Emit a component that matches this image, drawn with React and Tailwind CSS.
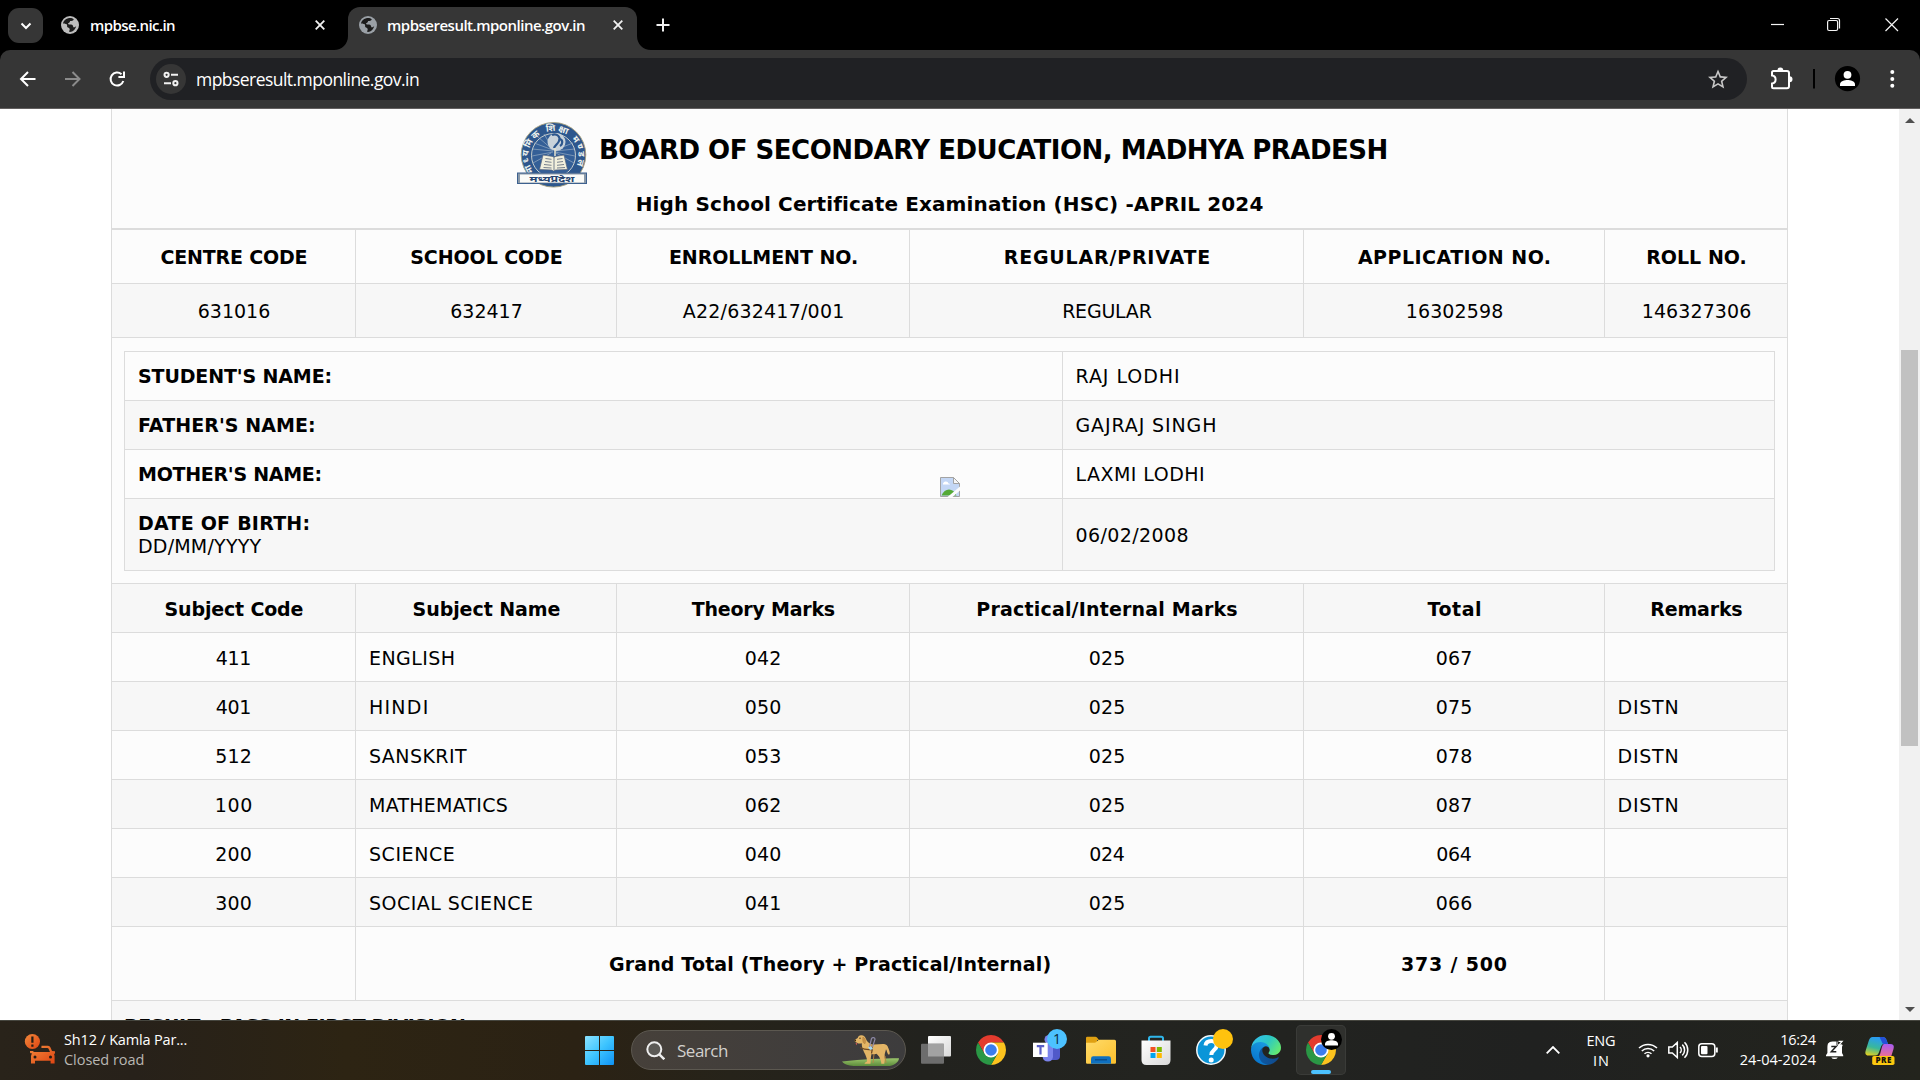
import { useLayoutEffect, useRef, useState } from "react";

/* Text whose drawn width is held to a fixed number of pixels through tracking. */
function Fit({ w, children, className = "" }) {
  const ref = useRef(null);
  const [space, setSpace] = useState(0);
  const text = String(children);
  useLayoutEffect(() => {
    const cs = getComputedStyle(ref.current);
    const ctx = document.createElement("canvas").getContext("2d");
    ctx.font = `${cs.fontWeight} ${cs.fontSize} ${cs.fontFamily}`;
    const m = ctx.measureText(text);
    const ink = m.actualBoundingBoxRight + m.actualBoundingBoxLeft;
    setSpace((w - ink) / Math.max(1, text.length - 1));
  }, [text, w]);
  return (
    <span
      ref={ref}
      className={`inline-block whitespace-nowrap ${className}`}
      style={{ letterSpacing: `${space}px`, marginRight: `${-space}px` }}
    >
      {text}
    </span>
  );
}

function Globe({ color }) {
  return (
    <svg className="h-[18px] w-[18px] shrink-0" viewBox="0 0 18 18">
      <circle cx="9" cy="9" r="9" fill={color} />
      <path d="M7.200 2.200C9 1.700 11.500 2 12.800 3.300c-.6 1.500-2 1.700-3.700 1.800-.3 1.600-.9 1.900-2.200 2.300.2 1 1.500 1 3 1 1.800.2 2.500 1.300 2.300 2.800 1.200.3 2.300-.3 3-1.200-.4 2.200-1.700 4-3.600 5.200-1 .6-2.400.8-3.200.7-.5-1 .5-1.900.3-3-.4-1-1.700-.9-2.400-1.800-.5-1 .2-2-.6-2.800-.9-.8-2.500-.3-3.700-1.100C2.300 5 4.300 2.800 7.200 2.200z" fill="#1c1c1c" />
    </svg>
  );
}

function TabClose() {
  return (
    <svg className="h-[10px] w-[10px]" viewBox="0 0 10 10" stroke="#f1f1f1" strokeWidth="1.8">
      <path d="M.7.7l8.600 8.600M9.300.7L.7 9.300" />
    </svg>
  );
}

function TabStrip() {
  return (
    <div className="flex h-[50px] bg-black text-[15px] font-semibold text-white">
      <div className="ml-2 mt-2 flex h-[35px] w-[35px] items-center justify-center rounded-[11px] bg-[#363636]">
        <svg className="h-[8px] w-[12px]" viewBox="0 0 12 8" fill="none" stroke="#fff" strokeWidth="2">
          <path d="M1.500 1.500L6 6l4.500-4.500" />
        </svg>
      </div>
      <div className="ml-[18px] mt-[7px] flex h-[36px] w-[273px] items-center">
        <Globe color="#bdbdbd" />
        <div className="ml-[11px] flex-1 leading-none"><Fit w={84}>mpbse.nic.in</Fit></div>
        <div className="mr-[9px]"><TabClose /></div>
      </div>
      <div className="flex items-end">
        <svg className="h-[14px] w-[14px]" viewBox="0 0 14 14"><path d="M14 0v14H0c8 0 14-6 14-14z" fill="#363636" /></svg>
        <div className="flex h-[43px] w-[289px] items-center rounded-t-[12px] bg-[#363636] pb-[7px] pl-[11px] pr-[14px]">
          <Globe color="#9aa0a6" />
          <div className="ml-[10px] flex-1 leading-none"><Fit w={197}>mpbseresult.mponline.gov.in</Fit></div>
          <TabClose />
        </div>
        <svg className="h-[14px] w-[14px]" viewBox="0 0 14 14"><path d="M0 0v14h14C6 14 0 8 0 0z" fill="#363636" /></svg>
      </div>
      <svg className="ml-[5px] mt-[18px] h-[14px] w-[14px]" viewBox="0 0 14 14" stroke="#f1f1f1" strokeWidth="2"><path d="M7 .5v13M.5 7h13" /></svg>
      <svg className="ml-auto mr-[21px] mt-[17px] h-[16px] w-[128px]" viewBox="1771 17 128 16" fill="none" stroke="#f4f4f4" strokeWidth="1.200">
        <path d="M1771 24.500h13" />
        <rect x="1827.600" y="20.500" width="10" height="10" rx="1.500" />
        <path d="M1830 18.500h7.500q2 0 2 2v8" />
        <path d="M1885.500 18.500l12.500 12.500M1898 18.500L1885.500 31" />
      </svg>
    </div>
  );
}

function Toolbar() {
  return (
    <div className="h-[59px] bg-black">
      <div className="flex h-[59px] items-center rounded-t-[10px] border-b border-[#625f5f] bg-[#363636]">
        <svg className="h-[18px] w-[130px] shrink-0" viewBox="0 70 130 18" fill="none" stroke="#fff" strokeWidth="2">
          <path d="M35.500 79H21.500M28 72l-7 7 7 7" />
          <path d="M65 79h14M72.500 72l7 7-7 7" stroke="#8b8b8b" />
          <path d="M123.300 81a6.500 6.500 0 1 1-1.800-6.800M124 71.500V77h-5.600" />
        </svg>
        <div className="ml-[20px] flex h-[42px] flex-1 items-center rounded-full bg-[#202124] pl-[6px] pr-[19px]">
          <div className="flex h-[30px] w-[30px] items-center justify-center rounded-full bg-[#363636]">
            <svg className="h-[16px] w-[16px]" viewBox="0 0 16 16" fill="none" stroke="#f1f1f1" strokeWidth="2">
              <circle cx="3.600" cy="3.800" r="2.100" /><path d="M8 3.800h7M1 12.200h7" /><circle cx="12.400" cy="12.200" r="2.100" />
            </svg>
          </div>
          <div className="ml-[10px] flex-1 pt-px text-[17.500px] leading-none text-white"><Fit w={222}>mpbseresult.mponline.gov.in</Fit></div>
          <svg className="h-[20px] w-[20px]" viewBox="2 2 20 19" fill="#c7c7c7">
            <path d="M22 9.240l-7.190-.62L12 2 9.190 8.630 2 9.240l5.460 4.730L5.820 21 12 17.270 18.180 21l-1.630-7.030L22 9.240zM12 15.400l-3.760 2.270 1-4.280-3.320-2.880 4.380-.38L12 6.100l1.710 4.040 4.380.38-3.320 2.880 1 4.280L12 15.400z" />
          </svg>
        </div>
        <svg className="ml-[20px] h-[30px] w-[153px] shrink-0" viewBox="1767 64 153 30" fill="none">
          <path d="M1773.500 71h13.500q2 0 2 2v13.200q0 2-2 2h-13.500q-1.500 0-1.500-1.500v-3.200c2.600-.4 3.600-2 3.600-4s-1-3.600-3.600-4v-3q0-1.500 1.500-1.500z" stroke="#fff" strokeWidth="2" />
          <path d="M1777.500 70.500a2.900 2.900 0 0 1 5.800 0zM1789.500 76.300a3 3 0 0 1 0 6z" fill="#fff" />
          <path d="M1814 69v19.500" stroke="#000" strokeWidth="2" />
          <circle cx="1847.500" cy="78.700" r="12.600" fill="#000" />
          <circle cx="1847.500" cy="74.800" r="3.900" fill="#fff" />
          <path d="M1840 86v-1.800c0-3 4.800-4.300 7.500-4.300s7.500 1.300 7.500 4.300V86z" fill="#fff" />
          <g fill="#fff"><circle cx="1892.300" cy="71.900" r="2" /><circle cx="1892.300" cy="78.900" r="2" /><circle cx="1892.300" cy="85.800" r="2" /></g>
        </svg>
      </div>
    </div>
  );
}

function BoardSeal() {
  return (
    <svg className="h-[66px] w-[74px]" viewBox="515 122 74 66">
      <defs>
        <path id="sealArc" d="M533.800 171.500A25 25 0 1 1 573.200 171.500" />
      </defs>
      <circle cx="553.500" cy="154.800" r="32.300" fill="#2d578d" stroke="#a9a27f" strokeWidth="0.900" />
      <circle cx="553.500" cy="155.500" r="22" fill="#345f97" stroke="#d5d8d2" strokeWidth="0.900" />
      <g stroke="#aebfce" strokeWidth="0.800" opacity="0.7">
        <path d="M553 150L534 143M553 151L532 149M553 152L532 156M551 153L533 163M553 150L538 137M553 149L544 134M555 150L573 143M555 151L575 149M555 152L575 156M556 153L574 163" />
      </g>
      <text fill="#eef2ee" fontSize="9" fontWeight="700" textLength="104" fontFamily="'Noto Sans', 'Noto Sans Devanagari', sans-serif">
        <textPath href="#sealArc">माध्यमिक शिक्षा मण्डल</textPath>
      </text>
      <circle cx="556.500" cy="142" r="9" fill="#c9d3da" />
      <path d="M552 135c5-2 9 2 7 6-1 3-4 4-5 7M560 139c3 1 3 5 0 7" stroke="#2d578d" strokeWidth="2.200" fill="none" />
      <path d="M555 148v8" stroke="#e8e4cf" strokeWidth="1.500" />
      <path d="M543 155l10 1.500 1 1 1-1 9-1.500 3.500 14.500-12 .5-2 1-2-1-12-.5z" fill="#f1efdc" stroke="#55627a" strokeWidth="0.700" />
      <path d="M554 157v13M545.500 158.500l6 .8M545 161.500l6.500.8M544 164.500l7.500.8M543.500 167.500l8 .5M557 159.300l5.500-.8M557 162.300l6-.8M557 165.300l7-.8M557 168l8-.5" stroke="#77808c" strokeWidth="1" />
      <rect x="517.500" y="173" width="69" height="10.500" fill="#8a99a8" stroke="#3d618f" strokeWidth="1" />
      <rect x="520" y="174.500" width="64" height="8" fill="#fbfbf8" />
      <text x="552" y="182" textAnchor="middle" textLength="45" lengthAdjust="spacingAndGlyphs" fill="#28456f" fontSize="8.500" fontWeight="700" fontFamily="'Noto Sans', 'Noto Sans Devanagari', sans-serif">मध्यप्रदेश</text>
    </svg>
  );
}

function BrokenImage() {
  return (
    <svg className="absolute left-[816px] top-[28px] h-[20px] w-[20px]" viewBox="0 0 20 20">
      <path d="M.5.5h13l6 6v13H.5z" fill="#c4d7f5" stroke="#a3a3a3" />
      <path d="M1.500 18.500c3-8 12-8 15 0z" fill="#54a936" />
      <path d="M3 6.500q1-2.500 3-2 2 0 2.500 2 1.500 0 1.500 1H3z" fill="#fff" />
      <path d="M13.500.5v6h6z" fill="#f7f7f7" stroke="#a3a3a3" />
      <path d="M20 9.500L7.500 20h5L20 13.500z" fill="#fcfcfc" />
    </svg>
  );
}

const COLS = "grid grid-cols-[244px_261px_293px_394px_301px_184px]";
const BOX = "flex items-center border-l border-t border-[#dcdcdc]";
const CELL = `${BOX} pt-px last:border-r`;
const LOW_CELL = `${BOX} pt-[3px] last:border-r`;

const HEADS = [["CENTRE CODE", 146], ["SCHOOL CODE", 150.5], ["ENROLLMENT NO.", 187], ["REGULAR/PRIVATE", 204.500], ["APPLICATION NO.", 192], ["ROLL NO.", 98.500]];
const CODES = [["631016", 70.500], ["632417", 70.500], ["A22/632417/001", 160.500], ["REGULAR", 88.500], ["16302598", 94.500], ["146327306", 106.500]];
const PERSON = [
  ["STUDENT'S NAME:", 191.500, "RAJ LODHI", 101.500],
  ["FATHER'S NAME:", 175, "GAJRAJ SINGH", 138.700],
  ["MOTHER'S NAME:", 181.500, "LAXMI LODHI", 126.500],
  ["DATE OF BIRTH:", 169.500, "06/02/2008", 111],
];
const SUBJECT_HEADS = [["Subject Code", 137], ["Subject Name", 146], ["Theory Marks", 143], ["Practical/Internal Marks", 260], ["Total", 52.700], ["Remarks", 91]];
const SUBJECTS = [
  ["411", "ENGLISH", 83.700, "042", "025", "067", ""],
  ["401", "HINDI", 56.700, "050", "025", "075", "DISTN"],
  ["512", "SANSKRIT", 97, "053", "025", "078", "DISTN"],
  ["100", "MATHEMATICS", 136.700, "062", "025", "087", "DISTN"],
  ["200", "SCIENCE", 83.700, "040", "024", "064", ""],
  ["300", "SOCIAL SCIENCE", 162, "041", "025", "066", ""],
];

function ResultSheet() {
  return (
    <div className="mx-auto w-[1677px] font-['Verdana','DejaVu_Sans',sans-serif] text-[19px] leading-[23px] text-black">
      <div className="flex h-[119px] flex-col items-center border-x border-[#dcdcdc] bg-[#fcfcfc]">
        <div className="flex pl-[2px] pt-[13px]">
          <BoardSeal />
          <div className="ml-[10px] w-[787px] pt-[12px] text-[26px] font-bold leading-[32px]"><Fit w={785.500}>BOARD OF SECONDARY EDUCATION, MADHYA PRADESH</Fit></div>
        </div>
        <div className="mt-[4px] text-[20px] font-bold leading-[24px]"><Fit w={625}>High School Certificate Examination (HSC) -APRIL 2024</Fit></div>
      </div>
      <div className={`${COLS} h-[55px] border-t border-[#dcdcdc] bg-[#fcfcfc] font-bold`}>
        {HEADS.map(([t, w]) => <div key={t} className={`${CELL} justify-center pl-px`}><Fit w={w}>{t}</Fit></div>)}
      </div>
      <div className={`${COLS} h-[54px] bg-[#f7f7f7]`}>
        {CODES.map(([t, w]) => <div key={t} className={`${CELL} justify-center pl-px`}><Fit w={w}>{t}</Fit></div>)}
      </div>
      <div className="h-[246px] border border-b-0 border-[#dcdcdc] bg-[#fcfcfc] px-[12px] pt-[13px]">
        <div className="border-b border-[#dcdcdc]">
          {PERSON.map(([label, lw, value, vw], i) => (
            <div key={label} className={`relative grid grid-cols-[938px_713px] ${i === 3 ? "h-[72px]" : "h-[49px]"} ${i % 2 ? "bg-[#f7f7f7]" : ""}`}>
              <div className={`${CELL} pl-[13px]`}>
                <div className="flex flex-col">
                  <b><Fit w={lw}>{label}</Fit></b>
                  {i === 3 && <Fit w={122.500}>DD/MM/YYYY</Fit>}
                </div>
              </div>
              <div className={`${BOX} border-r pl-[12.500px] pt-px`}><Fit w={vw}>{value}</Fit></div>
              {i === 2 && <BrokenImage />}
            </div>
          ))}
        </div>
      </div>
      <div className={`${COLS} h-[49px] bg-[#f7f7f7] font-bold`}>
        {SUBJECT_HEADS.map(([t, w]) => <div key={t} className={`${LOW_CELL} justify-center pl-px`}><Fit w={w}>{t}</Fit></div>)}
      </div>
      {SUBJECTS.map(([code, name, nw, theory, practical, total, remark], i) => (
        <div key={code} className={`${COLS} h-[49px] ${i % 2 ? "bg-[#f7f7f7]" : "bg-[#fcfcfc]"}`}>
          <div className={`${LOW_CELL} justify-center`}><Fit w={34.500}>{code}</Fit></div>
          <div className={`${LOW_CELL} pl-[13px]`}><Fit w={nw}>{name}</Fit></div>
          <div className={`${LOW_CELL} justify-center`}><Fit w={34.500}>{theory}</Fit></div>
          <div className={`${LOW_CELL} justify-center pl-px`}><Fit w={34.500}>{practical}</Fit></div>
          <div className={`${LOW_CELL} justify-center`}><Fit w={34.500}>{total}</Fit></div>
          <div className={`${LOW_CELL} pl-[12.500px]`}>{remark && <Fit w={59}>{remark}</Fit>}</div>
        </div>
      ))}
      <div className="grid h-[74px] grid-cols-[244px_948px_301px_184px] bg-[#fcfcfc] font-bold">
        <div className={CELL} />
        <div className={`${CELL} justify-center pl-px`}><Fit w={441.500}>Grand Total (Theory + Practical/Internal)</Fit></div>
        <div className={`${CELL} justify-center`}><Fit w={104.700}>373 / 500</Fit></div>
        <div className={CELL} />
      </div>
      <div className="flex h-[49px] items-center border border-[#dcdcdc] bg-[#f7f7f7] pl-[12px] pt-[3px] font-bold"><Fit w={340}>RESULT : PASS IN FIRST DIVISION</Fit></div>
    </div>
  );
}

function Scrollbar() {
  return (
    <div className="flex w-[21px] shrink-0 flex-col items-center bg-[#f1f1f1]">
      <svg className="mt-[9px] h-[5px] w-[10px]" viewBox="0 0 10 5"><path d="M0 5L5 0l5 5z" fill="#505050" /></svg>
      <div className="mt-[227px] h-[396px] w-[17px] bg-[#c1c1c1]" />
      <svg className="mb-[8px] mt-auto h-[5px] w-[10px]" viewBox="0 0 10 5"><path d="M0 0h10L5 5z" fill="#505050" /></svg>
    </div>
  );
}

function ChromeMark() {
  return (
    <g transform="translate(25 25) scale(.625)">
      <path d="M-20.780-12A24 24 0 0 1 20.780-12H0L-10.390 6z" fill="#e33b2e" />
      <path d="M20.780-12A24 24 0 0 1 0 24L10.390 6 0-12z" fill="#fcc31e" />
      <path d="M0 24A24 24 0 0 1-20.780-12L-10.390 6H10.390z" fill="#2a9745" />
      <circle r="12" fill="#fff" />
      <circle r="9.300" fill="#3b7ded" />
    </g>
  );
}

function Tile({ children, active }) {
  return (
    <div className={`h-[50px] w-[50px] shrink-0 rounded-[5px] ${active ? "bg-[#2f302d] ring-1 ring-inset ring-[#3a3b38]" : ""}`}>
      <svg className="h-[50px] w-[50px]" viewBox="0 0 50 50">{children}</svg>
    </div>
  );
}

function GuideDog() {
  return (
    <svg className="h-[33px] w-[58px]" viewBox="842 1035 58 33" fill="none">
      <defs>
        <linearGradient id="lawn" x1="0" x2="0" y1="0" y2="1"><stop stopColor="#9cc66b" /><stop offset="1" stopColor="#5d8d3c" /></linearGradient>
      </defs>
      <path d="M842 1062.500c10-1 20-2.300 30-2.600 9-.3 19-.6 27-.7 0 4-6 7.800-11 7.800h-32c-6 0-11-1-14-4.500z" fill="url(#lawn)" />
      <path d="M860 1036.500c3-.8 5 .6 6 3.500.8 2.500 3 4.500 6 5.500 4 .5 9-.8 13-.3 2.600.8 3 3 4 5.500.6 2 1.500 4.500-.2 5-1.600-1-1.800-4-2.800-5.500-.6 3-1.500 4-1.300 7 .3 2.500-.2 5-.4 7.500h-3c0-3-1-5-2.300-7.300-.8-1.200-1.700-2-2.500-2.700-2 .5-3.500.8-5 .4-.8 3-.7 6-1 9.600h-6c.4-1.500 2-1.500 2.600-2.500-.2-4-1.600-6-3-9-1.300-3-2.500-5.500-2.300-9-1.500.6-3.600.5-4.800-.5-1.500-.4-2.700-1.500-2.600-2.500.8-1 2.500-1.200 3.300-2.200.5-1.500 1.200-2.200 2.300-2.500z" fill="#e3b566" />
      <path d="M863 1038c2 1 3 4 2 6.500-1.500.3-2.500-2-2-6.500zM874 1055l-1 9M885 1057l1 7" stroke="#b98741" strokeWidth="0.900" fill="#c8934a" />
      <path d="M860 1048.500c3 1.500 8 2.500 12 2M872 1046.500c.5 3 .3 5.500-.5 8" stroke="#6e4a25" strokeWidth="1.200" />
      <path d="M868 1048l3-1 2 3-3 1z" fill="#a4daf5" />
      <path d="M869.500 1048l2-8.500c1-1.500 3.500-1 3.500.6l-2.500 8" stroke="#8d88a5" strokeWidth="1.200" />
      <path d="M855.500 1044l1.800.3-.8 2z" fill="#d85c5c" />
      <circle cx="860" cy="1039.300" r="0.700" fill="#3a2815" /><circle cx="855.200" cy="1041.500" r="0.900" fill="#3a2815" />
    </svg>
  );
}

function Taskbar() {
  return (
    <div className="flex h-[60px] items-start border-t border-[#46463f] bg-[linear-gradient(90deg,#29231a_0%,#27211a_7%,#2d2413_18%,#2b2214_30%,#26231a_38%,#22221e_48%,#232420_60%,#202120_80%,#23241d_100%)] font-['Segoe_UI','Open_Sans',sans-serif] text-[14.500px] leading-[20px] text-white">
      <svg className="ml-[24px] mt-[12px] h-[32px] w-[32px] shrink-0" viewBox="24 1033 32 32">
        <defs><linearGradient id="alert" x1="0" x2="1" y1="0" y2="1"><stop stopColor="#f28a3c" /><stop offset="1" stopColor="#de4412" /></linearGradient></defs>
        <circle cx="32.400" cy="1041.500" r="7.600" fill="url(#alert)" />
        <path d="M32.400 1036.500v6.300M32.400 1044.500v2.200" stroke="#231c15" strokeWidth="2.200" />
        <path d="M41.500 1045.700h6.500q1.800 0 2.500 1.700l1.500 3.600 3 .2v1.800q0 .8-1 .9.600 1 .6 2.500v7h-4v-2.700H35v2.700h-4v-7q0-2 1.200-3-2.200-.1-2.200-1v-1.300h3q.4 1 1.500 1H50l-1.600-3.600q-.3-.6-1-.6h-6z" fill="url(#alert)" />
        <circle cx="35" cy="1057" r="1.500" fill="#231c15" /><circle cx="50.500" cy="1057" r="1.500" fill="#231c15" />
      </svg>
      <div className="ml-[8px] mt-[9px] flex h-[40px] w-[521px] flex-col">
        <Fit w={122.500}>Sh12 / Kamla Par...</Fit>
        <span className="text-[#b9b7b3]"><Fit w={79.500}>Closed road</Fit></span>
      </div>
      <svg className="mt-[15px] h-[29px] w-[29px] shrink-0" viewBox="0 0 29 29">
        <defs><linearGradient id="win" x1="0" x2="1" y1="0" y2="1"><stop stopColor="#8be3ff" /><stop offset="0.500" stopColor="#3dc4ff" /><stop offset="1" stopColor="#0f92f5" /></linearGradient></defs>
        <path d="M1 0h13v14H0V1q0-1 1-1zM15 0h13q1 0 1 1v13H15zM0 15h14v14H1q-1 0-1-1zM15 15h14v13q0 1-1 1H15z" fill="url(#win)" />
      </svg>
      <div className="ml-[17px] mt-[9px] flex h-[40px] w-[275px] shrink-0 items-center rounded-full border border-[#5c5850] bg-[linear-gradient(90deg,#46403a,#3d3c3d)] pl-[14px] pr-[5px]">
        <svg className="h-[19px] w-[19px]" viewBox="0 0 19 19" fill="#5c5a56" stroke="#eee" strokeWidth="2"><circle cx="8.300" cy="8.300" r="7" /><path d="M13.300 13.300l5 5" strokeWidth="2.400" /></svg>
        <div className="ml-[12px] flex-1 pt-px text-[17px] text-[#d2d0cd]"><Fit w={51}>Search</Fit></div>
        <GuideDog />
      </div>
      <div className="ml-[5px] mt-[4px] flex gap-[5px]">
        <Tile>
          <defs><linearGradient id="pane" x1="0" x2="1" y1="0" y2="1"><stop stopColor="#fff" /><stop offset="1" stopColor="#d9d9d9" /></linearGradient></defs>
          <rect x="17" y="11" width="23" height="20.500" rx="1" fill="url(#pane)" />
          <rect x="10" y="18.700" width="23" height="20" rx="1" fill="#6d6d6d" />
          <path d="M17 18.700h16v12.800H17z" fill="#a2a2a2" />
        </Tile>
        <Tile><ChromeMark /></Tile>
        <Tile>
          <path d="M26 17h13v14q0 4-4 4h-6z" fill="#5059c9" />
          <path d="M22 18h10v14q-1 4.500-5 4.500-5 0-5.500-5z" fill="#7b83eb" />
          <circle cx="28" cy="14.500" r="4.500" fill="#7b83eb" />
          <rect x="12" y="17.700" width="14.700" height="14.300" fill="#fff" />
          <path d="M15.800 21.200h7.400M19.500 21v8.400" stroke="#5b5fc7" strokeWidth="2.200" />
          <circle cx="36" cy="14" r="10" fill="#4cc2ff" />
          <text x="36" y="19" textAnchor="middle" fontSize="14" fill="#0b2a3a" fontFamily="'Open Sans', sans-serif">1</text>
        </Tile>
        <Tile>
          <defs><linearGradient id="folder" x1="0" x2="1" y1="0" y2="1"><stop stopColor="#ffdb6b" /><stop offset="1" stopColor="#fcc02c" /></linearGradient></defs>
          <path d="M10 13q0-1.300 1.300-1.300h8q1 0 1.700.8l2 2.500h-2v6H10z" fill="#dfa012" />
          <path d="M10 17.700h8.500q1 0 1.800-.8l1.700-1.600q.6-.6 1.500-.6h15q1.500 0 1.500 1.500V37.500q0 1.200-1.200 1.200H11.200q-1.200 0-1.200-1.200z" fill="url(#folder)" />
          <path d="M15 38.700v-5q0-2.400 2.400-2.400h15.200q2.400 0 2.400 2.400v5z" fill="#0f70c0" />
          <path d="M19 34.800h12" stroke="#0a4a86" strokeWidth="1.300" />
        </Tile>
        <Tile>
          <path d="M18 16.500v-3q0-1.700 1.700-1.700h10.600q1.700 0 1.700 1.700v3" fill="none" stroke="#2fb6ea" strokeWidth="2" />
          <path d="M10.500 15.500h29V35q0 5-5 5h-19q-5 0-5-5z" fill="url(#pane)" />
          <rect x="19.500" y="22" width="5" height="5" fill="#f25022" /><rect x="25.800" y="22" width="5" height="5" fill="#7fba00" />
          <rect x="19.500" y="28" width="5" height="5" fill="#00a4ef" /><rect x="25.800" y="28" width="5" height="5" fill="#ffb900" />
        </Tile>
        <Tile>
          <circle cx="25" cy="25" r="14.200" fill="#0b95d8" stroke="#f4f8fa" strokeWidth="1.500" />
          <path d="M19.500 20.500c.5-4 3.500-4.500 5.800-4.500 3 0 5.300 1.800 5.300 4.700 0 4.500-5.300 4.300-5.300 9.300" fill="none" stroke="#fff" strokeWidth="4" />
          <circle cx="25.200" cy="35" r="2.500" fill="#fff" />
          <circle cx="37" cy="14" r="10" fill="#ffc20e" />
        </Tile>
        <Tile>
          <defs>
            <linearGradient id="edgeA" x1="0" x2="1"><stop stopColor="#0c59a4" /><stop offset="1" stopColor="#114a8b" /></linearGradient>
            <linearGradient id="edgeB" x1="0.700" x2="0.200" y1="0" y2="1"><stop stopColor="#1b9de2" /><stop offset="1" stopColor="#0671cb" /></linearGradient>
            <linearGradient id="edgeC" x1="0" x2="1" y1="0.200" y2="0.700"><stop stopColor="#35c1f1" /><stop offset="0.500" stopColor="#2cc8c4" /><stop offset="1" stopColor="#66eb6e" /></linearGradient>
          </defs>
          <g transform="translate(10 10) scale(.1172)">
            <path d="M231.100 190.500c-3.400 1.800-6.900 3.300-10.500 4.700a101.600 101.600 0 0 1-35.900 6.500c-47.300 0-88.500-32.500-88.500-74.300a31.500 31.500 0 0 1 16.400-27.300c-42.800 1.800-53.800 46.400-53.800 72.500 0 74 68.100 81.400 82.800 81.400 7.900 0 19.800-2.300 27-4.600l1.300-.4a128.300 128.300 0 0 0 66.600-52.800 4 4 0 0 0-5.400-5.700z" fill="url(#edgeA)" />
            <path d="M105.700 241.400a79.200 79.200 0 0 1-22.700-21.300 80.700 80.700 0 0 1 29.500-120c3.200-1.500 8.500-4.100 15.600-4a32.400 32.400 0 0 1 25.700 13 31.900 31.900 0 0 1 6.300 18.700c0-.2 24.500-79.600-80-79.600-43.900 0-80 41.700-80 78.200a130.200 130.200 0 0 0 12.100 56 128 128 0 0 0 156.400 67 75.500 75.500 0 0 1-62.800-8z" fill="url(#edgeB)" />
            <path d="M152.300 148.900c-.9 1-3.400 2.500-3.400 5.600 0 2.600 1.700 5.100 4.700 7.200 14.400 10 41.500 8.700 41.600 8.700a59.600 59.600 0 0 0 30.300-8.400 61.400 61.400 0 0 0 30.400-52.900c.3-22.400-8-37.300-11.300-43.900C223.500 23.900 177.700 0 128 0A128 128 0 0 0 0 126.200c.5-36.500 36.800-66 80-66 3.500 0 23.500.3 42 10.100 16.300 8.600 24.900 19 30.800 29.200 6.200 10.700 7.300 24.100 7.300 29.500 0 5.300-2.700 13.300-7.800 19.900z" fill="url(#edgeC)" />
          </g>
        </Tile>
        <Tile active>
          <ChromeMark />
          <circle cx="35.500" cy="14.500" r="10.500" fill="#000" />
          <circle cx="35.500" cy="11.300" r="3.400" fill="#fff" />
          <path d="M29 20.500v-1.800c0-2.400 4-3.500 6.500-3.500s6.500 1.100 6.500 3.500v1.800z" fill="#fff" />
          <rect x="15" y="45" width="20" height="4" rx="2" fill="#4cc2ff" />
        </Tile>
      </div>
      <svg className="ml-[200px] mt-[25px] h-[8px] w-[14px] shrink-0" viewBox="0 0 14 8" fill="none" stroke="#fff" strokeWidth="1.800"><path d="M.7 7.300L7 1l6.300 6.300" /></svg>
      <div className="ml-[25px] mt-[10px] flex w-[32px] flex-col items-center"><Fit w={27.500}>ENG</Fit><Fit w={14}>IN</Fit></div>
      <svg className="ml-[21px] mt-[17px] h-[24px] w-[80px] shrink-0" viewBox="1638 1038 80 24" fill="none" stroke="#fff" strokeWidth="1.500">
        <path d="M1639 1048a13 13 0 0 1 18 0M1641.800 1051a9 9 0 0 1 12.400 0M1644.500 1053.800a5.200 5.200 0 0 1 7 0" />
        <circle cx="1648" cy="1055.800" r="1.600" fill="#fff" stroke="none" />
        <path d="M1668.800 1047v6h3.500l5 4.500v-15l-5 4.500zM1680 1047a4.300 4.300 0 0 1 0 6M1682.300 1044.600a7.500 7.500 0 0 1 0 10.800M1684.500 1042.200a11 11 0 0 1 0 15.600" />
        <rect x="1698.800" y="1043.700" width="16" height="12.800" rx="3" />
        <rect x="1701" y="1046" width="6.500" height="8.200" rx="1" fill="#fff" stroke="none" />
        <path d="M1716.800 1047.500v5" strokeWidth="2" />
      </svg>
      <div className="mt-[9px] flex w-[98px] flex-col items-end"><Fit w={35.500}>16:24</Fit><Fit w={77}>24-04-2024</Fit></div>
      <svg className="ml-[10px] mt-[19px] h-[20px] w-[18px] shrink-0" viewBox="1827 1040 18 20">
        <path d="M1829 1043.500q1.500-2 4.500-2h5.500v3h4v8.500l1.200 2.300v1h-17.200v-1l1.400-2.300v-6q0-2 .6-3.500z" fill="#fff" />
        <path d="M1832.300 1057.500a3.500 2.500 0 0 0 6.500 0z" fill="#fff" />
        <path d="M1832.300 1046.500h4.800l-4.800 5.300h5" stroke="#202120" strokeWidth="1.500" fill="none" />
        <path d="M1838 1040v5.500h5" stroke="#202120" strokeWidth="1" fill="none" />
        <path d="M1839.500 1041.300h3.600l-3.600 4.200h4" stroke="#fff" strokeWidth="1.300" fill="none" />
      </svg>
      <svg className="ml-[21px] mt-[15px] h-[30px] w-[31px] shrink-0" viewBox="1865.500 1036 31 30">
        <defs>
          <linearGradient id="copA" x1="0.300" x2="0" y1="0" y2="1"><stop stopColor="#2a9df0" /><stop offset="0.500" stopColor="#39b89a" /><stop offset="1" stopColor="#f6d313" /></linearGradient>
          <linearGradient id="copB" x1="0.500" x2="0.400" y1="0" y2="1"><stop stopColor="#a95cf0" /><stop offset="1" stopColor="#f0708e" /></linearGradient>
        </defs>
        <path d="M1873 1037h10q3 0 4 3l1.500 4h-4q-2 0-2.700 2l-2.600 7q-1 2.500-3.500 2.500h-6.500q-4.500 0-3-5l3-9.500q1.200-4 3.800-4z" fill="url(#copA)" />
        <path d="M1880 1037h3q3 0 4 3l1.500 4h-4q-1.800 0-2.300-2.500z" fill="#2450d8" />
        <path d="M1884.500 1044h6q5 0 3.500 5l-2.500 8h-13.500q2-1 2.600-3l2-7.500q.7-2.500 1.900-2.500z" fill="url(#copB)" />
        <rect x="1872.700" y="1056" width="22.300" height="9" rx="1.800" fill="#fcc80f" />
        <text x="1883.900" y="1063.300" textAnchor="middle" fontSize="8" fontWeight="800" textLength="16" fill="#17140a" fontFamily="'Open Sans', sans-serif">PRE</text>
      </svg>
    </div>
  );
}

export default function App() {
  return (
    <div className="flex h-[1080px] w-[1920px] flex-col overflow-hidden bg-white font-['Segoe_UI','Open_Sans',sans-serif]">
      <TabStrip />
      <Toolbar />
      <div className="flex h-[911px] overflow-hidden">
        <main className="flex-1"><ResultSheet /></main>
        <Scrollbar />
      </div>
      <Taskbar />
    </div>
  );
}
